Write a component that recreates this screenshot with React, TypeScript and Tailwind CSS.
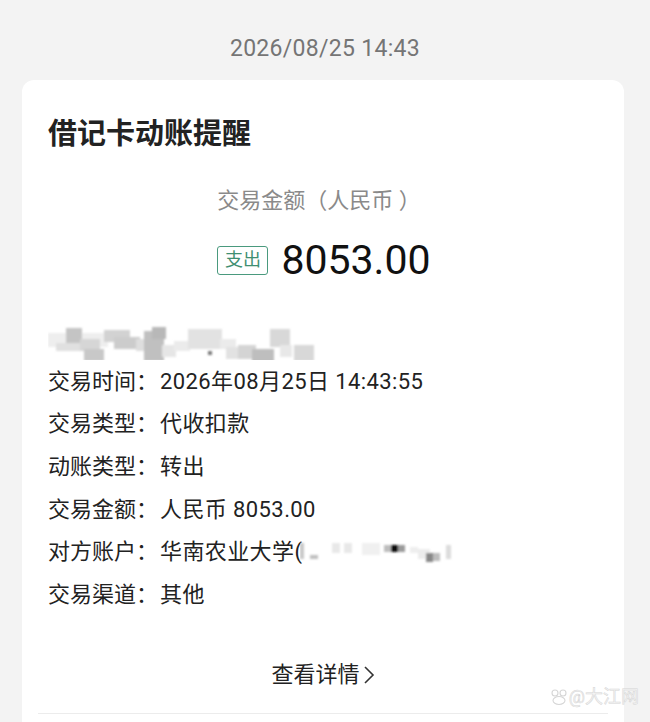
import React from "react";

const font = { fontFamily: 'Roboto, "Noto Sans CJK SC", "Noto Sans", sans-serif' };

function Mosaic({ blocks, w, h }: { blocks: [number, number, number, number, string][]; w: number; h: number }) {
  return (
    <svg width={w} height={h} viewBox={`0 0 ${w} ${h}`}>
      <defs>
        <filter id="bl" x="-10%" y="-10%" width="120%" height="120%">
          <feGaussianBlur stdDeviation="1.2" />
        </filter>
      </defs>
      <g filter="url(#bl)">
        {blocks.map(([x, y, bw, bh, c], i) => (
          <rect key={i} x={x} y={y} width={bw} height={bh} fill={c} />
        ))}
      </g>
    </svg>
  );
}

const topBlocks: [number, number, number, number, string][] = [
  [0, 8, 60, 14, "#eeeeee"],
  [18, 3, 16, 16, "#c4c4c4"],
  [8, 18, 26, 8, "#e0e0e0"],
  [32, 14, 20, 12, "#d6d6d6"],
  [36, 24, 20, 12, "#c8c8c8"],
  [56, 5, 26, 12, "#d2d2d2"],
  [66, 12, 26, 12, "#cccccc"],
  [88, 14, 18, 12, "#dedede"],
  [96, 6, 20, 30, "#c0c0c0"],
  [104, 2, 14, 12, "#b8b8b8"],
  [114, 20, 14, 12, "#e6e6e6"],
  [126, 16, 16, 10, "#ebebeb"],
  [140, 4, 34, 20, "#e2e2e2"],
  [172, 14, 16, 10, "#ebebeb"],
  [178, 22, 18, 12, "#e2e2e2"],
  [190, 20, 18, 14, "#d4d4d4"],
  [204, 24, 22, 14, "#bebebe"],
  [222, 4, 20, 18, "#d8d8d8"],
  [232, 20, 12, 12, "#e8e8e8"],
  [246, 20, 20, 16, "#d8d8d8"],
  [160, 26, 4, 4, "#7a7a7a"],
];

const acctBlocks: [number, number, number, number, string][] = [
  [0, 6, 4, 16, "#c8c8c8"],
  [10, 18, 8, 4, "#c0c0c0"],
  [32, 6, 8, 10, "#e8e8e8"],
  [44, 6, 8, 10, "#e8e8e8"],
  [62, 6, 18, 12, "#f0f0f0"],
  [84, 8, 7, 7, "#bdbdbd"],
  [91, 8, 7, 7, "#111111"],
  [98, 8, 7, 7, "#9a9a9a"],
  [110, 10, 8, 6, "#eeeeee"],
  [118, 12, 12, 10, "#ececec"],
  [126, 16, 7, 9, "#888888"],
  [133, 16, 7, 8, "#bdbdbd"],
  [146, 8, 5, 14, "#dcdcdc"],
];

const rows: [string, React.ReactNode][] = [
  ["交易时间：", "2026年08月25日 14:43:55"],
  ["交易类型：", "代收扣款"],
  ["动账类型：", "转出"],
  ["交易金额：", "人民币 8053.00"],
  [
    "对方账户：",
    <span className="flex items-center" key="a">
      华南农业大学(
      <span className="ml-[-2px] flex items-center">
        <Mosaic blocks={acctBlocks} w={156} h={30} />
      </span>
    </span>,
  ],
  ["交易渠道：", "其他"],
];

export default function App() {
  return (
    <div className="relative h-[722px] w-[650px] overflow-hidden bg-[#f3f3f3]" style={font}>
      <div className="pt-[34px] text-center text-[23px] leading-[30px] tracking-[0.3px] text-[#757575]">2026/08/25 14:43</div>
      <div className="ml-[22px] mt-[16px] h-[700px] w-[602px] rounded-[12px] bg-white px-[26px] pt-[38px]">
        <div className="text-[29px] font-bold leading-[32px] text-[#222]">借记卡动账提醒</div>
        <div className="mt-[37px] text-center text-[22px] leading-[28px] text-[#8a8a8a]">
          <span className="ml-[-8px]">交易金额（人民币 ）</span>
        </div>
        <div className="mt-[23px] flex h-[44px] items-center justify-center">
          <div className="ml-[2px] flex h-[29px] w-[51px] items-center justify-center rounded-[3px] border-[1.5px] border-[#4a9a7e] text-[18px] leading-none text-[#3f8f72]">
            支出
          </div>
          <div className="ml-[13px] text-[41px] font-normal leading-[44px] text-[#111]">8053.00</div>
        </div>
        <div className="mt-[43px] h-[35px]">
          <Mosaic blocks={topBlocks} w={272} h={35} />
        </div>
        <div>
          {rows.map(([k, v], i) => (
            <div key={i} className="flex h-[42.6px] items-center text-[22px] text-[#222]">
              <span>{k}</span>
              <span className="ml-[2px] flex items-center tracking-[0.4px]">{v}</span>
            </div>
          ))}
        </div>
        <div className="mt-[44px] flex h-[30px] items-center justify-center text-[22px] text-[#222]">
          <span>查看详情</span>
          <svg width="12" height="20" viewBox="0 0 12 20" className="ml-[3px]">
            <path d="M2 2 L10 10 L2 18" fill="none" stroke="#333" strokeWidth="1.6" />
          </svg>
        </div>
        <div className="mx-[-10px] mt-[23px] h-[1px] bg-[#ececec]" />
      </div>
      <div className="absolute bottom-[16px] right-[11px] flex items-center text-[18px] leading-none text-[#f4f4f4] [-webkit-text-stroke:0.5px_#d6d6d6]">
        <svg width="18" height="18" viewBox="0 0 18 18" className="mr-[1px]">
          <circle cx="5" cy="5" r="3" fill="none" stroke="#d6d6d6" strokeWidth="1.1" />
          <circle cx="13" cy="5" r="3" fill="none" stroke="#d6d6d6" strokeWidth="1.1" />
          <ellipse cx="9" cy="12.5" rx="6" ry="4" fill="none" stroke="#d6d6d6" strokeWidth="1.1" />
        </svg>
        <span>@大江网</span>
      </div>
    </div>
  );
}
